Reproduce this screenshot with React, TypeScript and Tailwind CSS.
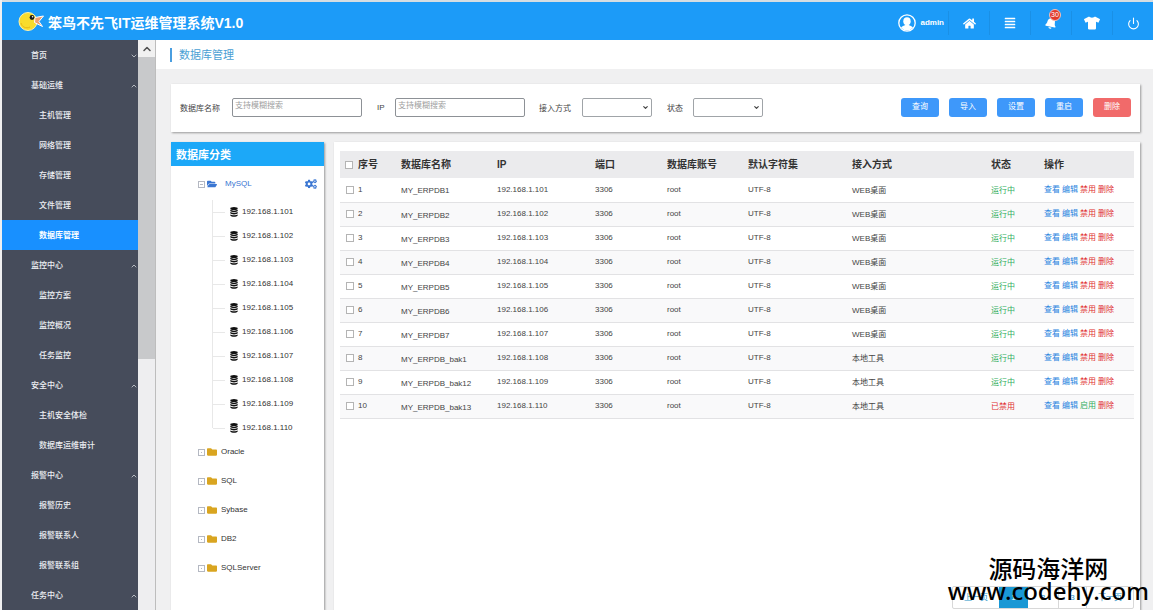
import { useState } from "react";
import {
  FaAlignJustify,
  FaBell,
  FaCogs,
  FaFolder,
  FaFolderOpen,
  FaHome,
  FaTshirt,
} from "react-icons/fa";
import { ChevronDown, ChevronUp, Power } from "lucide-react";

interface MenuGroup {
  title: string;
  open: boolean;
  children: string[];
}

interface Database {
  id: number;
  name: string;
  ip: string;
  access: string;
  enabled: boolean;
}

const menu: MenuGroup[] = [
  { title: "首页", open: false, children: [] },
  { title: "基础运维", open: true, children: ["主机管理", "网络管理", "存储管理", "文件管理", "数据库管理"] },
  { title: "监控中心", open: true, children: ["监控方案", "监控概况", "任务监控"] },
  { title: "安全中心", open: true, children: ["主机安全体检", "数据库运维审计"] },
  { title: "报警中心", open: true, children: ["报警历史", "报警联系人", "报警联系组"] },
  { title: "任务中心", open: true, children: [] },
];

const names = ["1", "2", "3", "4", "5", "6", "7", "_bak1", "_bak12", "_bak13"];

const databases: Database[] = names.map((suffix, i) => ({
  id: i + 1,
  name: `MY_ERPDB${suffix}`,
  ip: `192.168.1.${101 + i}`,
  access: i < 7 ? "WEB桌面" : "本地工具",
  enabled: i < 9,
}));

const folders = ["Oracle", "SQL", "Sybase", "DB2", "SQLServer"];

const columns = [
  { title: "数据库名称", width: "w-[96px]" },
  { title: "IP", width: "w-[98px]" },
  { title: "端口", width: "w-[72px]" },
  { title: "数据库账号", width: "w-[81px]" },
  { title: "默认字符集", width: "w-[104px]" },
  { title: "接入方式", width: "w-[139px]" },
  { title: "状态", width: "w-[53px]" },
  { title: "操作", width: "w-[90px]" },
];

const checkbox = "size-[8px] shrink-0 appearance-none border border-[#b4b4b4] bg-white checked:bg-[#1e9fff]";

function Logo() {
  return (
    <svg viewBox="0 0 26 20" className="h-5 w-[26px]">
      <circle cx="10" cy="10.5" r="9" fill="#f8dc2c" stroke="#fff3a8" strokeWidth="1" />
      <path d="M17 6.5 25.5 5 21 10.5 24.5 15.5 16.5 11.5Z" fill="#f0a070" stroke="#fff" strokeWidth="1" />
      <circle cx="14" cy="6.5" r="2.4" fill="#1a1a1a" />
      <circle cx="14.6" cy="5.8" r="0.8" fill="#fff" />
      <path d="M3 12c1 4 5 6 9 4" fill="none" stroke="#e8b818" strokeWidth="1" />
    </svg>
  );
}

function Avatar() {
  return (
    <svg viewBox="0 0 18 18" className="size-[18px]">
      <circle cx="9" cy="9" r="8.2" fill="none" stroke="#fff" strokeWidth="1.3" />
      <ellipse cx="9" cy="7.2" rx="3.7" ry="4" fill="#fff" />
      <path d="M3 13.6c1-1.7 3-2.2 4.3-2.7h3.4c1.3.5 3.3 1 4.3 2.7A7.500 7.500 0 0 1 9 16.500a7.500 7.500 0 0 1-6-2.900Z" fill="#fff" />
    </svg>
  );
}

function DiskIcon() {
  return (
    <svg viewBox="0 0 8 10" className="h-[10px] w-2" fill="#111">
      <ellipse cx="4" cy="1.6" rx="3.7" ry="1.5" />
      <path d="M.3 2.8c1.5 1.1 5.9 1.1 7.400 0v1.200c-1 1.500-6.400 1.500-7.400 0Z" />
      <path d="M.3 5.1c1.5 1.1 5.9 1.1 7.400 0v1.200c-1 1.500-6.400 1.500-7.400 0Z" />
      <path d="M.3 7.4c1.5 1.1 5.9 1.1 7.400 0v1.100c-1 1.700-6.400 1.700-7.400 0Z" />
    </svg>
  );
}

function Toggle({ open }: { open?: boolean }) {
  return (
    <svg viewBox="0 0 7 7" className="size-[7px]" fill="none" stroke="#b4b8c2" strokeWidth="1">
      <rect x=".5" y=".5" width="6" height="6" />
      <path d={open ? "M2 3.5h3" : "M3 3.5h1"} />
    </svg>
  );
}

function Header() {
  const cell = "flex h-6 w-[41px] items-center justify-center border-l border-[#1a90e6] text-white";
  return (
    <header className="flex h-10 shrink-0 items-center border-t-2 border-[#d5dde2] bg-[#1c9bf8] pl-4 text-white">
      <Logo />
      <h1 className="ml-1 flex-1 pt-1 text-[14px] font-bold">笨鸟不先飞IT运维管理系统V1.0</h1>
      <div className="flex items-center pt-1">
        <a href="#user" className="mr-1 flex items-center gap-1 text-[8px] font-bold">
          <Avatar />
          admin
        </a>
        <button aria-label="主页" className={cell}>
          <FaHome size={13} />
        </button>
        <button aria-label="列表" className={cell}>
          <FaAlignJustify size={12} />
        </button>
        <button aria-label="消息" className={cell}>
          <span className="relative">
            <FaBell size={12} className="rotate-12" />
            <span className="absolute -top-2 left-1 flex size-3 items-center justify-center rounded-full border border-[#f3c0b8] bg-[#e23a2a] text-[7px]">
              30
            </span>
          </span>
        </button>
        <button aria-label="换肤" className={cell}>
          <FaTshirt size={16} />
        </button>
        <button aria-label="退出" className={cell}>
          <Power size={13} />
        </button>
      </div>
    </header>
  );
}

function Sidebar() {
  const [active, setActive] = useState("数据库管理");
  return (
    <aside className="flex shrink-0 overflow-hidden">
      <nav className="w-[136px] bg-[#464c5b] text-[8px] font-medium text-[#eceef2]">
        {menu.map((group) => (
          <div key={group.title}>
            <button className="flex h-[30px] w-full items-center justify-between pt-[2px] pl-[29px]">
              {group.title}
              {group.open ? <ChevronUp size={8} /> : <ChevronDown size={8} />}
            </button>
            {group.children.map((item) => (
              <a
                key={item}
                href="#menu"
                onClick={() => setActive(item)}
                className={`flex h-[30px] items-center pt-[2px] pl-[37px] ${item === active ? "bg-[#1890ff] font-bold text-white" : ""}`}
              >
                {item}
              </a>
            ))}
          </div>
        ))}
      </nav>
      <div className="flex w-[18px] flex-col border-r border-[#bdbdbd] bg-[#eeeef0]">
        <div className="flex h-[17px] items-center justify-center bg-[#f1f1f1] text-[#505050]">
          <ChevronUp size={12} strokeWidth={3} />
        </div>
        <div className="h-[53%] bg-[#c8c9cb]" />
      </div>
    </aside>
  );
}

function Filters() {
  const input = "h-[19px] w-[130px] rounded-xs border border-[#8d9196] bg-white px-[2px] pb-[3px] text-[8px] placeholder:text-[#a0a0a0]";
  const select = "block h-[19px] w-[70px] appearance-none rounded-xs border border-[#a0a4a8] bg-white";
  const button = "h-[19px] w-[38px] rounded-[3px] text-[8px] text-white";
  return (
    <form className="mr-[13px] flex h-12 items-center bg-white pr-[9px] pb-[2px] pl-[9px] text-[8px] text-[#444] shadow-[1px_1px_2px_#999]">
      <label htmlFor="name" className="w-[52px] pt-1">数据库名称</label>
      <input id="name" placeholder="支持模糊搜索" className={input} />
      <label htmlFor="ip" className="ml-[15px] w-[18px] pt-[2px]">IP</label>
      <input id="ip" placeholder="支持模糊搜索" className={input} />
      <label htmlFor="access" className="ml-[14px] w-[43px] pt-1">接入方式</label>
      <span className="relative">
        <select id="access" className={select} />
        <ChevronDown size={7} strokeWidth={4} className="pointer-events-none absolute top-[6px] right-[3px]" />
      </span>
      <label htmlFor="state" className="ml-[15px] w-[26px] pt-1">状态</label>
      <span className="relative">
        <select id="state" className={select} />
        <ChevronDown size={7} strokeWidth={4} className="pointer-events-none absolute top-[6px] right-[3px]" />
      </span>
      <div className="ml-auto flex gap-[10px]">
        {["查询", "导入", "设置", "重启"].map((label) => (
          <button key={label} type="button" className={`${button} bg-[#3e98fa]`}>
            {label}
          </button>
        ))}
        <button type="button" className={`${button} bg-[#f16a6a]`}>删除</button>
      </div>
    </form>
  );
}

function Tree() {
  return (
    <section className="w-[153px] shrink-0 bg-white text-[8px] text-[#333] shadow-[1px_1px_2px_#999]">
      <h2 className="flex h-6 items-center bg-[#1ca8f8] pt-[2px] pl-[5px] text-[11px] font-bold text-white">数据库分类</h2>
      <div className="flex h-[34px] items-center pt-[2px] pr-[7px] pl-[27px] text-[#3a76d2]">
        <Toggle open />
        <FaFolderOpen size={10} className="ml-[2px]" />
        <span className="ml-2">MySQL</span>
        <FaCogs size={12} className="ml-auto" />
      </div>
      <ul className="pl-[41px]">
        {databases.map((db) => (
          <li key={db.id} className="group flex h-6 items-center">
            <span className="h-full w-px bg-[#e8e8e8] group-last:h-3 group-last:self-start" />
            <span className="mr-[5px] h-px w-3 bg-[#e8e8e8]" />
            <DiskIcon />
            <span className="ml-1">{db.ip}</span>
          </li>
        ))}
      </ul>
      <ul className="flex flex-col gap-[5px]">
        {folders.map((folder) => (
          <li key={folder} className="flex h-6 items-center pl-[27px]">
            <Toggle />
            <FaFolder size={10} className="ml-[2px] text-[#d9a520]" />
            <span className="ml-1">{folder}</span>
          </li>
        ))}
      </ul>
    </section>
  );
}

function DatabaseTable() {
  return (
    <table className="w-full table-fixed border-collapse text-left text-[8px] text-[#444]">
      <thead>
        <tr className="h-[27px] bg-[#ebebed] text-[10px] text-[#333]">
          <th className="w-[61px] pl-[5px]">
            <label className="flex items-center gap-[5px]">
              <input type="checkbox" className={checkbox} />
              序号
            </label>
          </th>
          {columns.map((col) => (
            <th key={col.title} className={col.width}>{col.title}</th>
          ))}
        </tr>
      </thead>
      <tbody>
        {databases.map((db) => (
          <tr key={db.id} className="h-6 border-b border-[#e2e2e4] even:bg-[#f9f9fa]">
            <td className="pl-[6px]">
              <label className="flex items-center gap-1">
                <input type="checkbox" className={checkbox} />
                {db.id}
              </label>
            </td>
            <td className="pt-[3px]">{db.name}</td>
            <td>{db.ip}</td>
            <td>3306</td>
            <td>root</td>
            <td>UTF-8</td>
            <td className="pt-[2px]">{db.access}</td>
            <td className={`pt-[2px] ${db.enabled ? "text-[#2fae5c]" : "text-[#e03030]"}`}>
              {db.enabled ? "运行中" : "已禁用"}
            </td>
            <td>
              <div className="flex gap-[2px] whitespace-nowrap text-[#e03030]">
                <a href="#view" className="text-[#2b84e0]">查看</a>
                <a href="#edit" className="text-[#2b84e0]">编辑</a>
                {db.enabled ? <a href="#disable">禁用</a> : <a href="#enable" className="text-[#2fae5c]">启用</a>}
                <a href="#delete">删除</a>
              </div>
            </td>
          </tr>
        ))}
      </tbody>
    </table>
  );
}

function Pagination() {
  return (
    <nav className="mt-auto mb-px flex h-[23px] self-end rounded-xs border border-[#d8d8d8] text-[8px] text-[#2a93c9]">
      <button className="w-[46px]">上一页</button>
      <button className="w-[29px] bg-[#1a98d5] text-white">1</button>
      <button className="w-[30px]">2</button>
      <button className="w-[29px] border-x border-[#d8d8d8]">3</button>
      <button className="w-[46px]">下一页</button>
    </nav>
  );
}

export default function App() {
  return (
    <div className="relative flex h-screen flex-col overflow-hidden bg-[#f0f0f1] pl-[2px] font-['Liberation_Sans','Noto_Sans_CJK_SC',sans-serif]">
      <Header />
      <div className="flex min-h-0 flex-1">
        <Sidebar />
        <main className="flex min-w-0 flex-1 flex-col">
          <div className="flex h-[29px] shrink-0 items-center bg-white pl-[14px]">
            <h2 className="border-l-2 border-[#4a9ee0] pl-[7px] text-[11px] leading-[14px] text-[#4a9fd4]">数据库管理</h2>
          </div>
          <div className="flex min-h-0 flex-1 flex-col gap-[10px] pt-[15px] pl-[15px]">
            <Filters />
            <div className="flex min-h-0 flex-1 gap-[10px] pr-[13px]">
              <Tree />
              <section className="flex min-w-0 flex-1 flex-col bg-white pt-[9px] pr-[6px] pl-[6px] shadow-[1px_1px_2px_#999]">
                <DatabaseTable />
                <Pagination />
              </section>
            </div>
          </div>
        </main>
      </div>
      <div className="pointer-events-none absolute right-1 bottom-2 flex flex-col items-center font-['Noto_Sans','Noto_Sans_CJK_SC',sans-serif] text-[24px] leading-[22px] font-medium text-black">
        <span>源码海洋网</span>
        <span>www.codehy.com</span>
      </div>
    </div>
  );
}
